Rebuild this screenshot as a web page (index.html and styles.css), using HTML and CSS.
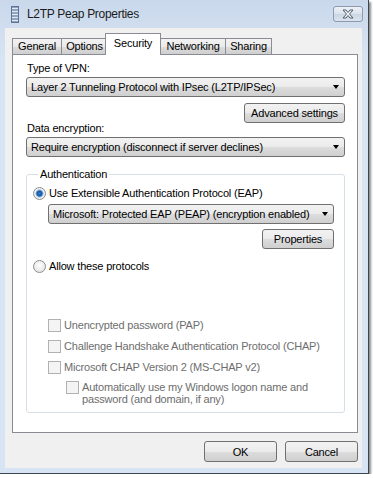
FILE: index.html
```html
<!DOCTYPE html>
<html lang="en">
    <head>
        <title>L2TP Peap Properties</title>
        <meta charset="UTF-8">
        <link rel="stylesheet" href="styles.css">
    </head>
    <body>

        <div class="window">

            <div class="titlebar">
                <svg class="title-icon" width="8" height="17" viewBox="0 0 8 17">
                    <rect x="0.5" y="0.5" width="7" height="16" fill="#8ea4bf" stroke="#5d7391"/>
                    <rect x="1" y="2" width="6" height="1" fill="#dfe8f3"/>
                    <rect x="1" y="5" width="6" height="1" fill="#dfe8f3"/>
                    <rect x="1" y="8" width="6" height="1" fill="#dfe8f3"/>
                    <rect x="1" y="11" width="6" height="1" fill="#dfe8f3"/>
                    <rect x="1" y="14" width="6" height="1" fill="#dfe8f3"/>
                </svg>
                <span class="title">L2TP Peap Properties</span>
                <div class="close">
                    <svg width="14" height="10" viewBox="0 0 14 10">
                        <path d="M2 1 L5 1 L7 3.5 L9 1 L12 1 L8.5 5 L12 9 L9 9 L7 6.5 L5 9 L2 9 L5.5 5 Z" fill="#f4f6f9" stroke="#4d5a6b" stroke-width="1" stroke-linejoin="round"/>
                    </svg>
                </div>
            </div>

            <div class="client">

                <div class="tabs">
                    <div class="tab tab-general">General</div>
                    <div class="tab tab-options">Options</div>
                    <div class="tab tab-active">Security</div>
                    <div class="tab tab-networking">Networking</div>
                    <div class="tab tab-sharing">Sharing</div>
                </div>

                <div class="panel">
                    <div class="label label-first">Type of VPN:</div>
                    <div class="combo">
                        <span>Layer 2 Tunneling Protocol with IPsec (L2TP/IPSec)</span>
                        <span class="arrow"></span>
                    </div>
                    <div class="button button-advanced">Advanced settings</div>

                    <div class="label label-data">Data encryption:</div>
                    <div class="combo">
                        <span>Require encryption (disconnect if server declines)</span>
                        <span class="arrow"></span>
                    </div>

                    <fieldset class="group">
                        <legend>Authentication</legend>

                        <div class="option option-eap">
                            <span class="radio radio-on"></span>
                            <span>Use Extensible Authentication Protocol (EAP)</span>
                        </div>
                        <div class="combo combo-eap">
                            <span>Microsoft: Protected EAP (PEAP) (encryption enabled)</span>
                            <span class="arrow"></span>
                        </div>
                        <div class="button button-props">Properties</div>

                        <div class="option option-allow">
                            <span class="radio"></span>
                            <span>Allow these protocols</span>
                        </div>

                        <div class="option check check-pap">
                            <span class="box"></span>
                            <span>Unencrypted password (PAP)</span>
                        </div>
                        <div class="option check">
                            <span class="box"></span>
                            <span>Challenge Handshake Authentication Protocol (CHAP)</span>
                        </div>
                        <div class="option check">
                            <span class="box"></span>
                            <span>Microsoft CHAP Version 2 (MS-CHAP v2)</span>
                        </div>
                        <div class="option check check-auto">
                            <span class="box"></span>
                            <span>Automatically use my Windows logon name and<br>password (and domain, if any)</span>
                        </div>
                    </fieldset>
                </div>

                <div class="actions">
                    <div class="button button-dialog">OK</div>
                    <div class="button button-dialog">Cancel</div>
                </div>

            </div>
        </div>

    </body>
</html>
```

FILE: styles.css
```css
body {
    margin: 0;
    background: #ffffff;
    font-family: "Liberation Sans", Arial, sans-serif;
    font-size: 11px;
    letter-spacing: -0.18px;
    color: #000000;
}

.window {
    width: 368px;
    height: 473px;
    display: flex;
    flex-direction: column;
    background: linear-gradient(to bottom, #c9d8eb, #d7e4f3 60px, #d6e4f3);
    border-right: 1px solid #3d4650;
    border-bottom: 1px solid #3d4650;
    box-shadow: 2px 2px 2px rgba(0, 0, 0, 0.45);
}

/* barra de titulo */
.titlebar {
    height: 28px;
    display: flex;
    align-items: center;
    padding-left: 11px;
    padding-right: 5px;
}

.title-icon {
    margin-top: 1px;
}

.title {
    margin-left: 8px;
    font-size: 12px;
    letter-spacing: -0.3px;
    color: #1b1b1b;
    flex: 1;
}

.close {
    width: 28px;
    height: 14px;
    border: 1px solid #8d9aad;
    border-radius: 3px;
    background: linear-gradient(to bottom, #eef2f8, #d8e1ec 50%, #cbd6e4 51%, #dae3ee);
    display: flex;
    align-items: center;
    justify-content: center;
    margin-top: -1px;
}

/* area cliente */
.client {
    flex: 1;
    margin: 0 6px 5px 5px;
    background: #f0f0f0;
    padding: 5px 4px 5px 7px;
    display: flex;
    flex-direction: column;
}

.tabs {
    display: flex;
    align-items: flex-end;
    height: 21px;
    position: relative;
    z-index: 1;
}

.tab {
    height: 15px;
    line-height: 15px;
    text-align: center;
    box-sizing: content-box;
    border: 1px solid #898c95;
    border-bottom: none;
    background: linear-gradient(to bottom, #f2f2f2, #ebebeb 50%, #dddddd 51%, #cfcfcf);
    margin-right: -1px;
}

.tab-general {
    width: 48px;
}

.tab-options {
    width: 45px;
}

.tab-networking {
    width: 64px;
}

.tab-sharing {
    width: 45px;
}

.tab-active {
    width: 54px;
    line-height: 18px;
    background: #ffffff;
    margin: 0 -1px -1px -2px;
    position: relative;
    z-index: 2;
    height: 21px;
}

.panel {
    height: 377px;
    background: #ffffff;
    border: 1px solid #898c95;
    padding: 0 12px 0 13px;
    display: flex;
    flex-direction: column;
}

.label {
    line-height: 14px;
    padding-left: 1px;
}

.label-first {
    margin-top: 6px;
    margin-bottom: 2px;
}

.label-data {
    margin-top: -2px;
    margin-bottom: 2px;
}

.combo {
    height: 18px;
    border: 1px solid #707070;
    border-radius: 3px;
    background: linear-gradient(to bottom, #f2f2f2, #ebebeb 50%, #dddddd 51%, #cfcfcf);
    display: flex;
    align-items: center;
    justify-content: space-between;
    padding: 0 5px 0 4px;
}

.arrow {
    width: 0;
    height: 0;
    border-left: 3.5px solid transparent;
    border-right: 3.5px solid transparent;
    border-top: 4px solid #000000;
}

.button {
    height: 18px;
    border: 1px solid #707070;
    border-radius: 3px;
    background: linear-gradient(to bottom, #f2f2f2, #ebebeb 50%, #dddddd 51%, #cfcfcf);
    display: flex;
    align-items: center;
    justify-content: center;
}

.button-advanced {
    align-self: flex-end;
    width: 99px;
    margin-top: 6px;
}

/* grupo autenticacao */
.group {
    margin: 10px 0 0 0;
    padding: 0 10px 7px 6px;
    border: 1px solid #d5dfe5;
    border-radius: 3px;
    display: flex;
    flex-direction: column;
}

.group legend {
    padding: 0 2px;
    margin-left: 5px;
    line-height: 14px;
}

.option {
    display: flex;
    align-items: center;
    line-height: 14px;
}

.option-eap {
    margin-top: 5px;
}

.option-allow {
    margin-top: 10px;
}

.radio {
    width: 11px;
    height: 11px;
    border: 1px solid #8e8f8f;
    border-radius: 50%;
    background: radial-gradient(circle at 50% 40%, #ffffff, #dcdcdc);
    margin-right: 3px;
    box-sizing: content-box;
}

.radio-on {
    background: radial-gradient(circle, #2a81d3 0, #1a54a0 2.5px, #8cb6e3 3.5px, #f4f4f4 4.5px, #dcdcdc);
}

.combo-eap {
    margin: 4px 0 0 15px;
}

.button-props {
    align-self: flex-end;
    width: 70px;
    margin-top: 5px;
}

.check {
    margin-left: 15px;
    margin-top: 7px;
    color: #6d6d6d;
}

.check-pap {
    margin-top: 45px;
}

.check-auto {
    margin-left: 33px;
    margin-top: 7px;
    align-items: flex-start;
    line-height: 12px;
}

.box {
    width: 11px;
    height: 11px;
    border: 1px solid #b1b1b1;
    background: #f4f4f4;
    margin-right: 3px;
    flex: none;
}

.actions {
    display: flex;
    justify-content: flex-end;
    gap: 8px;
    margin-top: 8px;
}

.button-dialog {
    width: 71px;
    height: 19px;
}
```
